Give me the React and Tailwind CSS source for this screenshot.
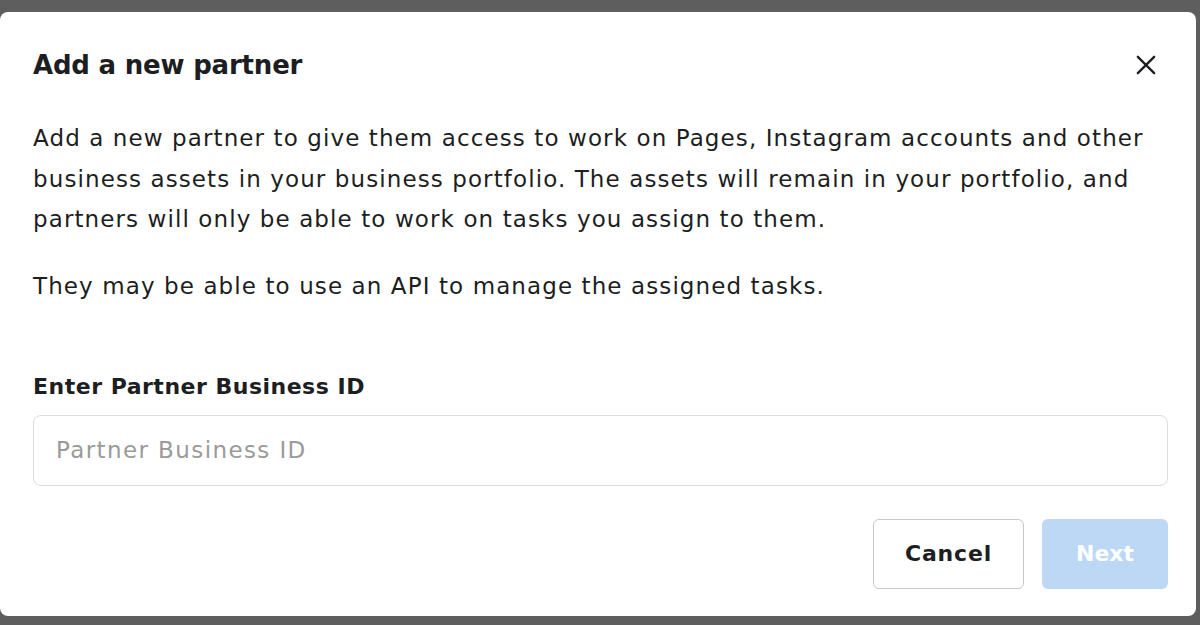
import React from 'react';

const lines = [
  'Add a new partner to give them access to work on Pages, Instagram accounts and other',
  'business assets in your business portfolio. The assets will remain in your portfolio, and',
  'partners will only be able to work on tasks you assign to them.',
];

export default function App() {
  return (
    <div
      className="w-[1200px] h-[625px] bg-[#5e5e5e] pt-[12px] pb-[9px] overflow-hidden"
      style={{ fontFamily: '"DejaVu Sans", Verdana, sans-serif' }}
    >
      <div className="h-full w-[1196px] bg-white rounded-lg flex flex-col pl-[33px] pr-[28px]">
        {/* Header */}
        <div className="flex items-center justify-between h-[108px] pb-[2px]">
          <h1 className="text-[26px] font-bold text-[#1c1e21] tracking-[-0.2px]">Add a new partner</h1>
          <button className="mr-[8px] text-[#1c1e21]">
            <svg width="28" height="28" viewBox="0 0 24 24" fill="none" stroke="currentColor" strokeWidth="2" strokeLinecap="round">
              <path d="M5 5 L19 19 M19 5 L5 19" />
            </svg>
          </button>
        </div>

        {/* Body */}
        <div className="text-[23px] leading-[40.5px] text-[#1c1e21] mt-[-2px] tracking-[1.1px]">
          {lines.map((l) => (
            <div key={l} className="whitespace-nowrap">{l}</div>
          ))}
        </div>
        <p className="text-[23px] leading-[40px] text-[#1c1e21] mt-[26px] tracking-[1.1px] whitespace-nowrap">
          They may be able to use an API to manage the assigned tasks.
        </p>

        {/* Field */}
        <label className="mt-[66px] text-[22px] font-bold text-[#1c1e21] leading-[30px] tracking-[0.5px]">
          Enter Partner Business ID
        </label>
        <input
          placeholder="Partner Business ID"
          className="mt-[13px] w-[1135px] h-[71px] rounded-lg border border-[#dadde1] px-[22px] text-[23px] tracking-[1.4px] placeholder:text-[#9a9a9a] outline-none"
          style={{ fontFamily: '"DejaVu Sans", Verdana, sans-serif' }}
        />

        {/* Footer */}
        <div className="flex justify-end gap-[18px] mt-[33px]">
          <button className="w-[151px] h-[70px] rounded-md border border-[#c4c7cc] bg-white text-[22px] font-bold text-[#1c1e21] tracking-[0.8px]">
            Cancel
          </button>
          <button className="w-[126px] h-[70px] rounded-md bg-[#bcd8f5] text-[22px] font-bold text-white">
            Next
          </button>
        </div>
      </div>
    </div>
  );
}
